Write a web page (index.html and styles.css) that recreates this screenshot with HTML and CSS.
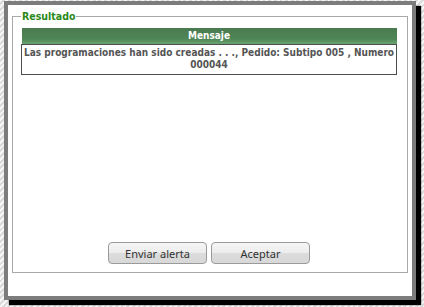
FILE: index.html
```html
<!DOCTYPE html>
<html lang="es">
<head>
<meta charset="utf-8">
<title>Resultado</title>
<link rel="stylesheet" href="styles.css">
</head>
<body>
<div class="dialog">
  <fieldset class="result">
    <legend class="result-title">Resultado</legend>
    <table class="msg-table">
      <thead>
        <tr><th>Mensaje</th></tr>
      </thead>
      <tbody>
        <tr><td>Las programaciones han sido creadas . . ., Pedido: Subtipo 005 , Numero 000044</td></tr>
      </tbody>
    </table>
    <div class="actions">
      <button class="btn" type="button">Enviar alerta</button>
      <button class="btn" type="button">Aceptar</button>
    </div>
  </fieldset>
</div>
</body>
</html>
```
FILE: styles.css
```css
html, body {
  margin: 0;
  padding: 0;
}
body {
  width: 424px;
  height: 307px;
  overflow: hidden;
  background: repeating-linear-gradient(135deg, #f6f6f6 0px, #f6f6f6 2px, #dadada 2px, #dadada 4px);
  font-family: "DejaVu Sans Condensed", "DejaVu Sans", Verdana, sans-serif;
}
.dialog {
  box-sizing: border-box;
  margin: 1px 0 0 4px;
  width: 412px;
  height: 299px;
  border: 4px solid #7c7c7c;
  background: #fff;
  box-shadow: 5px 5px 1px #000;
  padding: 5px 0 0 4px;
}
.result {
  box-sizing: border-box;
  margin: 0;
  width: 396px;
  height: 263px;
  border: 1px solid #a9a9a9;
  padding: 5px 10px 8px 8px;
  display: flex;
  flex-direction: column;
  min-width: 0;
}
.result-title {
  padding: 0 1px;
  font-size: 10.5px;
  line-height: 13px;
  font-weight: bold;
  color: #2a8a1a;
}
.msg-table {
  width: 376px;
  border-collapse: collapse;
  font-size: 10px;
  font-weight: bold;
}
.msg-table th {
  height: 16px;
  padding: 0;
  color: #fff;
  text-align: center;
  background: linear-gradient(#4a7a50, #4f8656 70%, #6aa570);
  line-height: 16px;
}
.msg-table td {
  border: 1px solid #4d4d4d;
  padding: 2px 1px 3px;
  color: #555;
  text-align: center;
  line-height: 12px;
}
.actions {
  margin-top: auto;
  display: flex;
  justify-content: center;
  gap: 4px;
}
.btn {
  box-sizing: border-box;
  width: 99px;
  height: 22px;
  border: 1px solid #9a9a9a;
  border-radius: 4px;
  background: linear-gradient(#f6f6f6, #ececec 50%, #dcdcdc 51%, #d8d8d8);
  font-family: "Noto Sans", "Open Sans", sans-serif;
  font-size: 11px;
  color: #333;
  padding: 0;
}
```
